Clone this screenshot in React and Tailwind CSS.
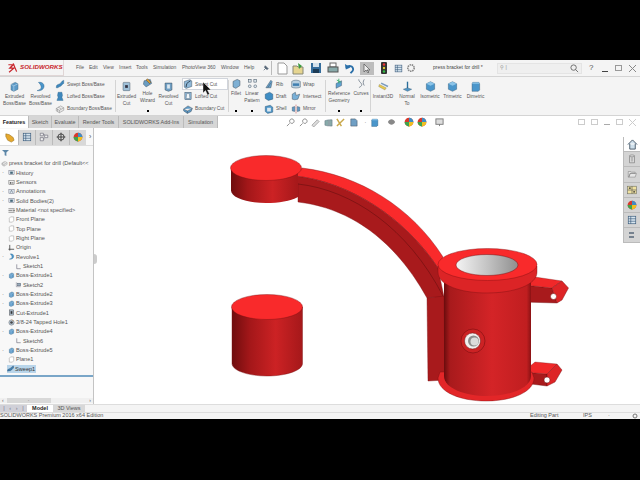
import React from "react";

const Ico = ({ size = 12, children }) => (
  <svg width={size} height={size} viewBox="0 0 16 16" className="shrink-0">
    {children}
  </svg>
);

// small hand drawn glyphs, all on a 16x16 grid
const glyphs = {
  extrude: (
    <>
      <path d="M3 5l6-3 4 2v8l-6 3-4-2z" fill="#5c9ac8" stroke="#35607f" strokeWidth=".7" />
      <path d="M3 5l4 2 6-3M7 7v8" fill="none" stroke="#c8dff0" strokeWidth=".8" />
    </>
  ),
  revolve: <path d="M5 2c6-1 9 3 8 7s-6 6-10 5c3-1 6-2 6-5S7 4 5 2z" fill="#4a96cb" stroke="#2c6086" strokeWidth=".6" />,
  swept: <path d="M2 14c0-5 2-5 5-6s3-5 7-6v5c-3 1-3 4-6 5s-3 2-3 2z" fill="#3f88bd" stroke="#2c6086" strokeWidth=".6" />,
  lofted: <path d="M5 2h6l1 5-1 3 2 5H3l2-5-1-3z" fill="#3f88bd" stroke="#2c6086" strokeWidth=".6" />,
  boundary: (
    <path d="M2 7l7-4 5 3v4l-7 4-5-3zM2 7l5 3 7-4M7 10v4M5 5l5 3M4 12V8" fill="#e8e8e8" stroke="#777" strokeWidth=".7" />
  ),
  cut: (
    <>
      <rect x="3" y="2" width="10" height="12" rx="1" fill="#9fc0d8" stroke="#456" strokeWidth=".7" />
      <rect x="6" y="6" width="4" height="4" fill="#334" />
    </>
  ),
  wizard: (
    <>
      <path d="M3 4l9-2 2 6-8 5-4-4z" fill="#6a9cc0" stroke="#345" strokeWidth=".6" />
      <path d="M8 1l5 5-2 2-5-5z" fill="#e0a030" stroke="#333" strokeWidth=".6" />
    </>
  ),
  revcut: (
    <>
      <path d="M3 3h10v10l-5 2-5-2z" fill="#6f9fc4" stroke="#345" strokeWidth=".7" />
      <path d="M6 5h4v6H6z" fill="#dde8f0" />
    </>
  ),
  sweptcut: (
    <>
      <path d="M2 4l9-3 3 2v9l-9 3-3-2z" fill="#8fb8d8" stroke="#345" strokeWidth=".7" />
      <path d="M5 13c0-5 2-8 7-10" fill="none" stroke="#234" strokeWidth="1.4" />
    </>
  ),
  loftcut: (
    <>
      <rect x="3" y="2" width="10" height="12" fill="#8fb8d8" stroke="#345" strokeWidth=".7" />
      <path d="M6 4h4l1 8H5z" fill="#f0f5f9" stroke="#345" strokeWidth=".5" />
    </>
  ),
  boundcut: <path d="M1 8l7-5 7 4-2 5-6 3-6-4zM1 8l6 3 8-4M7 11v4" fill="#5f9ac6" stroke="#345" strokeWidth=".7" />,
  fillet: <path d="M3 5l6-3 4 2v7l-6 4-4-2z" fill="#7fb0d4" stroke="#345" strokeWidth=".7" />,
  pattern: (
    <g fill="#dfe8ee" stroke="#456" strokeWidth=".8">
      <rect x="2" y="2" width="4" height="4" />
      <rect x="10" y="2" width="4" height="4" />
      <circle cx="4" cy="12" r="2" />
      <circle cx="12" cy="12" r="2" />
    </g>
  ),
  rib: <path d="M3 14L11 2l2 2-2 10zM6 14l5-8" fill="#69a2cc" stroke="#345" strokeWidth=".7" />,
  draft: <path d="M2 5l7-3 5 3v8l-7 2-5-3z" fill="#3f8dc4" stroke="#27506e" strokeWidth=".7" />,
  shell: (
    <>
      <path d="M2 4l8-2 4 3v8l-8 2-4-3z" fill="#4f95c6" stroke="#27506e" strokeWidth=".7" />
      <path d="M5 6h6v6H5z" fill="#dce8f0" />
    </>
  ),
  wrap: (
    <>
      <path d="M1 4c4-3 10-3 14 0v9c-4 2-10 2-14 0z" fill="#b7cfe0" stroke="#456" strokeWidth=".7" />
      <rect x="3" y="7" width="10" height="4" fill="#3f7fb0" />
    </>
  ),
  intersect: <path d="M2 13V5l5-3 1 5 6-2-3 8-5 1z" fill="#78b0d8" stroke="#345" strokeWidth=".7" />,
  mirror: (
    <>
      <path d="M8 1v14" stroke="#c44" strokeWidth="1" strokeDasharray="2 1" />
      <path d="M2 5l4-1v8l-4-1zM14 5l-4-1v8l4-1z" fill="#5f9ac6" stroke="#345" strokeWidth=".6" />
    </>
  ),
  refgeo: (
    <>
      <path d="M3 8l8-4v7l-8 4z" fill="#5fa0d0" stroke="#345" strokeWidth=".6" />
      <path d="M7 1v7M4 3l6 3" stroke="#3a6" strokeWidth="1.2" />
    </>
  ),
  curves: <path d="M4 2c0 4 6 6 4 9s-4 2-3 3M12 2c-2 3-2 6 0 9" fill="none" stroke="#456" strokeWidth=".9" />,
  instant: (
    <>
      <path d="M2 5l10 5-2 3L1 8z" fill="#e8c84a" stroke="#886" strokeWidth=".6" />
      <path d="M5 2l10 5-1 2L4 4z" fill="#7a9cc0" />
    </>
  ),
  normal: (
    <>
      <path d="M8 1v10" stroke="#2a6d9a" strokeWidth="2" />
      <path d="M2 12l6-2 6 2-6 3z" fill="#4f95c6" stroke="#27506e" strokeWidth=".6" />
    </>
  ),
  cube: (
    <>
      <path d="M8 1l6 3v8l-6 3-6-3V4z" fill="#4a96cb" stroke="#27506e" strokeWidth=".6" />
      <path d="M8 1l6 3-6 3-6-3z" fill="#8cc4e8" />
    </>
  ),
  cubed: (
    <>
      <path d="M4 2h9l1 2v9l-2 2H3V4z" fill="#4a96cb" stroke="#27506e" strokeWidth=".6" />
      <path d="M4 2h9l1 2H3z" fill="#8cc4e8" />
    </>
  ),
  folder: <path d="M2 4h4l1 1h6v2H5L3 13H2zM5 7h10l-2 6H3z" fill="#e6e6e6" stroke="#777" strokeWidth=".8" />,
  sensor: (
    <>
      <rect x="2" y="4" width="12" height="9" fill="#eee" stroke="#555" />
      <circle cx="6" cy="9" r="2" fill="#555" />
      <circle cx="11" cy="9" r="1.5" fill="#555" />
    </>
  ),
  anno: (
    <>
      <rect x="2" y="3" width="12" height="10" fill="#dfe8f0" stroke="#667" />
      <path d="M5 11l3-6 3 6" fill="none" stroke="#345" />
    </>
  ),
  bodies: (
    <>
      <rect x="2" y="3" width="12" height="10" fill="#dfe8f0" stroke="#667" />
      <rect x="5" y="6" width="6" height="5" fill="#467" />
    </>
  ),
  material: <path d="M1 4h14M1 8h9M1 12h14M12 7h3v2h-3z" stroke="#555" strokeWidth="1.4" fill="none" />,
  plane: <path d="M6 2h7v9l-3 3H3V5z" fill="#fff" stroke="#888" />,
  origin: <path d="M4 2v10h10M1 12h3M4 12v3" fill="none" stroke="#222" strokeWidth="1.6" />,
  target: (
    <>
      <circle cx="8" cy="8" r="5" fill="none" stroke="#222" strokeWidth="1.2" />
      <path d="M8 1v14M1 8h14" stroke="#222" strokeWidth="1.2" />
    </>
  ),
  config: <path d="M2 2h5v4H2zM2 9h5v5H2zM9 5h5v4H9zM7 4h2M7 11h2" fill="#eee" stroke="#667" />,
  sketch: <path d="M4 3v10h9" fill="none" stroke="#667" strokeWidth="1.4" />,
  sketch2: (
    <>
      <path d="M3 3v10h10" fill="none" stroke="#667" />
      <rect x="6" y="5" width="7" height="6" fill="#9ab" stroke="#456" />
    </>
  ),
  cutex: (
    <>
      <rect x="3" y="2" width="10" height="12" fill="#abc" stroke="#444" />
      <rect x="6" y="5" width="4" height="6" fill="#333" />
    </>
  ),
  tapped: (
    <>
      <circle cx="8" cy="8" r="6" fill="#bcd" stroke="#555" />
      <circle cx="8" cy="8" r="3" fill="#444" />
      <path d="M8 1l5 4" stroke="#c83" />
    </>
  ),
  sweep: <path d="M1 14c0-5 3-5 6-6s3-5 8-6v5c-3 1-3 4-7 6z" fill="#3f7fb0" stroke="#234" strokeWidth=".6" />,
  color: (
    <>
      <circle cx="8" cy="8" r="7" fill="#d8392b" />
      <path d="M8 8V1a7 7 0 0 1 7 7z" fill="#3f8dc4" />
      <path d="M8 8h7a7 7 0 0 1-7 7z" fill="#f0c020" />
      <path d="M8 8v7a7 7 0 0 1-7-7z" fill="#3fa34d" />
    </>
  ),
  list: (
    <>
      <rect x="2" y="2" width="12" height="12" fill="#d8e6f0" stroke="#357" />
      <path d="M2 6h12M2 10h12M6 2v12" stroke="#357" />
    </>
  ),
  can: (
    <>
      <path d="M4 3h8v11H4z" fill="#ddd" stroke="#777" />
      <ellipse cx="8" cy="3" rx="4" ry="1.5" fill="#eee" stroke="#777" />
      <path d="M7 5v7M9 5v7" stroke="#999" />
    </>
  ),
  grid: (
    <>
      <rect x="1" y="2" width="14" height="12" fill="#f0e2a0" stroke="#776" />
      <path d="M1 8h14M8 2v12" stroke="#555" />
      <rect x="3" y="4" width="3" height="2" fill="#333" />
      <rect x="10" y="10" width="3" height="2" fill="#333" />
    </>
  ),
};

const Big = ({ w, glyph, lines, dot, icon = 11, top = 4 }) => (
  <div className={`relative flex h-full shrink-0 flex-col items-center text-center leading-[7px] ${w}`}>
    <div className={top === 4 ? "mb-[1px] mt-[4px]" : "mb-[1px] mt-[1px]"}>
      <Ico size={icon}>{glyphs[glyph]}</Ico>
    </div>
    {lines.map((l) => (
      <span key={l} className="whitespace-nowrap">
        {l}
      </span>
    ))}
    {dot && <span className="absolute bottom-[3px] h-[2px] w-[2px] bg-black" />}
  </div>
);

const Small = ({ glyph, label, boxed }) => (
  <div
    className={`flex h-[12.5px] items-center gap-[2px] whitespace-nowrap ${
      boxed ? "border border-gray-300 bg-white" : "border border-transparent"
    }`}
  >
    <Ico size={10}>{glyphs[glyph]}</Ico>
    <span>{label}</span>
  </div>
);

const Sep = () => <div className="my-[3px] w-px shrink-0 bg-[#d4d4d4]" />;

const menus = [
  ["File", "w-[13px]"],
  ["Edit", "w-[14px]"],
  ["View", "w-[16px]"],
  ["Insert", "w-[17px]"],
  ["Tools", "w-[17px]"],
  ["Simulation", "w-[29px]"],
  ["PhotoView 360", "w-[39px]"],
  ["Window", "w-[23px]"],
  ["Help", "w-[19px]"],
];

const tabs = [
  ["Features", "w-[29px] bg-white font-bold text-[#222]"],
  ["Sketch", "w-[23px] bg-[#d6d6d6]"],
  ["Evaluate", "w-[27px] bg-[#d6d6d6]"],
  ["Render Tools", "w-[40px] bg-[#d6d6d6]"],
  ["SOLIDWORKS Add-Ins", "w-[65px] bg-[#d6d6d6]"],
  ["Simulation", "w-[34px] bg-[#d6d6d6]"],
];

const tree = [
  ["press bracket for drill  (Default<<", "folder", 0, false],
  ["History", "bodies", 1, true],
  ["Sensors", "sensor", 1, false],
  ["Annotations", "anno", 1, true],
  ["Solid Bodies(2)", "bodies", 1, true],
  ["Material <not specified>", "material", 1, false],
  ["Front Plane", "plane", 1, false],
  ["Top Plane", "plane", 1, false],
  ["Right Plane", "plane", 1, false],
  ["Origin", "origin", 1, false],
  ["Revolve1", "revolve", 1, true],
  ["Sketch1", "sketch", 2, false],
  ["Boss-Extrude1", "extrude", 1, true],
  ["Sketch2", "sketch2", 2, false],
  ["Boss-Extrude2", "extrude", 1, true],
  ["Boss-Extrude3", "extrude", 1, true],
  ["Cut-Extrude1", "cutex", 1, false],
  ["3/8-24 Tapped Hole1", "tapped", 1, false],
  ["Boss-Extrude4", "extrude", 1, true],
  ["Sketch6", "sketch", 2, false],
  ["Boss-Extrude5", "extrude", 1, true],
  ["Plane1", "plane", 1, false],
];

const Model = () => (
  <svg viewBox="94 128 529 276" className="h-full w-full">
    <defs>
      <linearGradient id="side" x1="0" x2="1" y1="0" y2="0">
        <stop offset="0" stopColor="#6f0d0e" />
        <stop offset=".25" stopColor="#a31719" />
        <stop offset=".62" stopColor="#cc2224" />
        <stop offset="1" stopColor="#a5181a" />
      </linearGradient>
      <linearGradient id="body" x1="0" x2="1" y1="0" y2="0">
        <stop offset="0" stopColor="#6a0c0d" />
        <stop offset=".07" stopColor="#a81a1c" />
        <stop offset=".55" stopColor="#d42427" />
        <stop offset=".95" stopColor="#c01e20" />
        <stop offset="1" stopColor="#8a1214" />
      </linearGradient>
      <linearGradient id="bore" x1="0" x2="1" y1="0" y2="0">
        <stop offset="0" stopColor="#f4f4f4" />
        <stop offset=".5" stopColor="#c4c4c4" />
        <stop offset="1" stopColor="#8f8f8f" />
      </linearGradient>
    </defs>

    {/* arm */}
    <path d="M302 168C360 175 412 208 443 257L438 268C405 218 350 182 295 176Z" fill="#f92a2b" stroke="#7a1012" strokeWidth=".4" />
    <path d="M295 176C350 182 405 218 438 268L444 297L427 298C395 240 350 208 298 202L298 184Z" fill="#a81a1c" stroke="#7a1012" strokeWidth=".4" />
    <path d="M298 184C352 190 408 228 443 296" fill="none" stroke="#5c0c0d" strokeWidth=".5" />
    <path d="M427 298L444 296L445 380L428 381Z" fill="#a81a1c" stroke="#7a1012" strokeWidth=".4" />

    {/* top disc */}
    <path d="M231 168V190.5C231 197.5 247 203 266 203C279 203 290 201 298 197V170Z" fill="url(#side)" />
    <ellipse cx="266" cy="168" rx="35.5" ry="12.5" fill="#f92a2b" stroke="#7a1012" strokeWidth=".4" />

    {/* loose cylinder */}
    <path d="M232 307V363.5C232 370.5 248 376 267 376C286 376 302.5 370.5 302.5 363.5V307Z" fill="url(#side)" stroke="#7a1012" strokeWidth=".4" />
    <ellipse cx="267" cy="307" rx="35.5" ry="12.5" fill="#f92a2b" stroke="#7a1012" strokeWidth=".4" />

    {/* lugs */}
    <path d="M524 285L552 288L557 303L523 302Z" fill="#a81a1c" stroke="#6d0d0e" strokeWidth=".4" />
    <path d="M524 285L535 277L562 281L552 288Z" fill="#f02829" stroke="#6d0d0e" strokeWidth=".3" />
    <path d="M552 288L562 281L568.5 288L562 300L557 303Z" fill="#dd2426" stroke="#6d0d0e" strokeWidth=".4" />
    <circle cx="553.5" cy="296.5" r="3" fill="#fff" stroke="#6d0d0e" strokeWidth=".5" />
    <path d="M523 372L547 374L547 386L523 383Z" fill="#a81a1c" stroke="#6d0d0e" strokeWidth=".4" />
    <path d="M523 372L535 362L557 364L547 374Z" fill="#f02829" stroke="#6d0d0e" strokeWidth=".3" />
    <path d="M547 374L557 364L562 370L555 382L547 386Z" fill="#dd2426" stroke="#6d0d0e" strokeWidth=".4" />
    <circle cx="547" cy="380" r="3" fill="#fff" stroke="#6d0d0e" strokeWidth=".5" />

    {/* main body */}
    <path d="M438 378C438 392 460 401 486 401C512 401 534 392 534 378L532 372H440Z" fill="#e32628" stroke="#7a1012" strokeWidth=".4" />
    <path d="M444 278H531V376C531 388 510 396 487 396C464 396 444 388 444 376Z" fill="url(#body)" />
    <path d="M438 266V272C438 285 460 293 487 293C514 293 537 285 537 272V266Z" fill="#dc2426" stroke="#7a1012" strokeWidth=".4" />
    <ellipse cx="487.5" cy="264.5" rx="49.5" ry="16" fill="#f92a2b" stroke="#7a1012" strokeWidth=".4" />
    <ellipse cx="487" cy="265" rx="31" ry="10.5" fill="url(#bore)" stroke="#7a1012" strokeWidth=".5" />

    {/* side boss */}
    <circle cx="473" cy="341" r="12" fill="#cc2224" stroke="#6d0d0e" strokeWidth=".5" />
    <circle cx="472.5" cy="341" r="8" fill="#f0f0f0" stroke="#6d0d0e" strokeWidth=".5" />
    <circle cx="473.5" cy="341" r="5.5" fill="#8c8c8c" />
    <circle cx="474.5" cy="341.5" r="4" fill="#dcdcdc" />
  </svg>
);

const headsUp = [
  ["search", 291], ["search", 303], ["edit", 317], ["box", 329], ["cross", 342], ["doc", 354],
];

export default function App() {
  return (
    <div className="flex h-[480px] w-[640px] flex-col overflow-hidden bg-black font-['Liberation_Sans',sans-serif] text-[5px] text-[#555]">
      <div className="h-[60px] shrink-0" />

      {/* menu bar */}
      <div className="flex h-[16px] shrink-0 items-center bg-[#f4f4f4]">
        <div className="flex h-full w-[64px] shrink-0 items-center gap-[2px] border-r border-b border-[#e0d6d6] pl-[7px] text-[6.2px] font-bold italic leading-none text-[#c8242b]">
          <svg width="11" height="11" viewBox="0 0 16 16">
            <path d="M2 4h7L4 9h6l-7 6M9 2l5 12" fill="none" stroke="#c8242b" strokeWidth="1.8" />
          </svg>
          <span>SOLIDWORKS</span>
        </div>
        <div className="ml-[12px] flex shrink-0 items-center">
          {menus.map(([m, w]) => (
            <span key={m} className={`whitespace-nowrap ${w}`}>
              {m}
            </span>
          ))}
        </div>
        <svg width="6" height="6" viewBox="0 0 8 8" className="shrink-0">
          <path d="M1 7l3-3M3 1l4 4-2 1-3-3z" fill="#567" stroke="#567" />
        </svg>
        <div className="ml-[2px] h-[14px] w-px shrink-0 bg-[#bbb]" />
        {/* quick access */}
        <div className="ml-[5px] flex shrink-0 items-center">
          <div className="flex w-[15px]">
            <svg width="11" height="13" viewBox="0 0 11 13"><path d="M1 1h6l3 3v8H1z" fill="#fff" stroke="#999" /></svg>
          </div>
          <div className="flex w-[18px]">
            <svg width="13" height="13" viewBox="0 0 13 13"><path d="M1 4h4l1 1h5v7H1z" fill="#e6d590" stroke="#887" /><path d="M6 1l4 3-3 3z" fill="#3a9a3a" /></svg>
          </div>
          <div className="flex w-[17px]">
            <svg width="12" height="12" viewBox="0 0 12 12"><rect x="1" y="1" width="10" height="10" fill="#356d9c" /><rect x="3" y="1" width="6" height="4" fill="#d5e2ec" /><rect x="3" y="7" width="6" height="4" fill="#1c3b55" /></svg>
          </div>
          <div className="flex w-[17px]">
            <svg width="12" height="12" viewBox="0 0 12 12"><rect x="3" y="1" width="6" height="4" fill="#fff" stroke="#666" /><rect x="1" y="5" width="10" height="5" fill="#8aa" stroke="#555" /></svg>
          </div>
          <div className="flex w-[16px]">
            <svg width="11" height="11" viewBox="0 0 12 12"><path d="M2 5c3-3 8-2 8 2 0 2-2 3-3 4" fill="none" stroke="#2a6fa8" strokeWidth="2" /><path d="M1 1l1 6 5-2z" fill="#2a6fa8" /></svg>
          </div>
          <div className="flex h-[13px] w-[14px] items-center justify-center bg-[#bdbdbd]">
            <svg width="9" height="11" viewBox="0 0 9 11"><path d="M1 1v8l2-2 2 3 1-1-2-2h3z" fill="#eee" stroke="#555" strokeWidth=".7" /></svg>
          </div>
          <div className="ml-[7px] flex w-[13px]">
            <svg width="6" height="12" viewBox="0 0 6 12"><rect width="6" height="12" rx="1" fill="#333" /><circle cx="3" cy="2.5" r="1.2" fill="#e33" /><circle cx="3" cy="6" r="1.2" fill="#dc3" /><circle cx="3" cy="9.5" r="1.2" fill="#3b4" /></svg>
          </div>
          <div className="flex w-[12px]">
            <Ico size={9}>{glyphs.list}</Ico>
          </div>
          <svg width="10" height="10" viewBox="0 0 10 10"><circle cx="5" cy="5" r="3.2" fill="none" stroke="#888" strokeWidth="1.6" strokeDasharray="1.5 .7" /></svg>
        </div>
        <span className="ml-[17px] w-[52px] shrink-0 whitespace-nowrap text-[#444]">press bracket for drill *</span>
        <div className="ml-[12px] flex h-[11px] w-[85px] shrink-0 items-center border border-[#e4e4e4] bg-[#efefef] pl-[2px]">
          <span className="text-[#888]">⚲ |</span>
          <svg width="9" height="9" viewBox="0 0 10 10" className="ml-auto mr-[2px]"><circle cx="4" cy="4" r="3" fill="none" stroke="#666" /><path d="M6 6l3 3" stroke="#666" /></svg>
        </div>
        <span className="ml-[7px] shrink-0 text-[8px] text-[#555]">?</span>
        <div className="ml-auto flex shrink-0 items-center gap-[7px] pr-[4px]">
          <span className="h-px w-[6px] translate-y-[3px] bg-[#444]" />
          <span className="h-[6px] w-[7px] border border-[#999]" />
          <svg width="7" height="7" viewBox="0 0 7 7"><path d="M0 0l7 7M7 0L0 7" stroke="#888" /></svg>
        </div>
      </div>

      {/* ribbon */}
      <div className="flex h-[40px] shrink-0 border-y border-[#d4d4d4] bg-[#f4f4f4] text-[4.8px]">
        <Big w="w-[28px] pl-[1px]" glyph="extrude" lines={["Extruded", "Boss/Base"]} />
        <Big w="w-[25px]" glyph="revolve" lines={["Revolved", "Boss/Base"]} />
        <div className="flex w-[62px] shrink-0 flex-col pl-[1px] pt-[1px]">
          <Small glyph="swept" label="Swept Boss/Base" />
          <Small glyph="lofted" label="Lofted Boss/Base" />
          <Small glyph="boundary" label="Boundary Boss/Base" />
        </div>
        <Sep />
        <Big w="w-[21px]" glyph="cut" lines={["Extruded", "Cut"]} />
        <Big w="w-[21px]" glyph="wizard" lines={["Hole", "Wizard"]} top={1} dot />
        <Big w="w-[21px]" glyph="revcut" lines={["Revolved", "Cut"]} />
        <div className="ml-[3px] flex w-[46px] shrink-0 flex-col pt-[1px]">
          <Small glyph="sweptcut" label="Swept Cut" boxed />
          <Small glyph="loftcut" label="Lofted Cut" />
          <Small glyph="boundcut" label="Boundary Cut" />
        </div>
        <Sep />
        <Big w="w-[14px]" glyph="fillet" lines={["Fillet"]} top={1} dot />
        <Big w="w-[18px]" glyph="pattern" lines={["Linear", "Pattern"]} top={1} dot />
        <div className="ml-[2px] flex w-[27px] shrink-0 flex-col pt-[1px]">
          <Small glyph="rib" label="Rib" />
          <Small glyph="draft" label="Draft" />
          <Small glyph="shell" label="Shell" />
        </div>
        <div className="flex w-[35px] shrink-0 flex-col pt-[1px]">
          <Small glyph="wrap" label="Wrap" />
          <Small glyph="intersect" label="Intersect" />
          <Small glyph="mirror" label="Mirror" />
        </div>
        <Sep />
        <Big w="w-[26px]" glyph="refgeo" lines={["Reference", "Geometry"]} top={1} dot />
        <Big w="w-[18px]" glyph="curves" lines={["Curves"]} top={1} dot />
        <Sep />
        <Big w="w-[24px]" glyph="instant" lines={["Instant3D"]} />
        <Big w="w-[24px]" glyph="normal" lines={["Normal", "To"]} />
        <Big w="w-[22px]" glyph="cube" lines={["Isometric"]} />
        <Big w="w-[23px]" glyph="cube" lines={["Trimetric"]} />
        <Big w="w-[23px]" glyph="cubed" lines={["Dimetric"]} />
      </div>

      {/* tabs and heads-up toolbar */}
      <div className="flex h-[12px] shrink-0 items-center bg-white text-[5.4px]">
        {tabs.map(([t, cls]) => (
          <div key={t} className={`flex h-full items-center justify-center whitespace-nowrap border-r border-[#bbb] ${cls}`}>
            {t}
          </div>
        ))}
        <div className="ml-[68px] flex items-center">
          {headsUp.map(([k, x]) => (
            <span key={x} className="flex w-[12.5px] items-center">
              <svg width="9" height="9" viewBox="0 0 10 10">
                {k === "search" ? (
                  <path d="M1 9l3-3M6.5 1a2.5 2.5 0 1 0 .01 0" fill="none" stroke="#888" />
                ) : k === "edit" ? (
                  <path d="M1 8l6-6 2 2-6 6z" fill="#ddd" stroke="#888" strokeWidth=".7" />
                ) : k === "box" ? (
                  <path d="M1 3l4-1v7l-4-1zM6 2h3v7H6z" fill="#8aa" stroke="#567" strokeWidth=".5" />
                ) : k === "cross" ? (
                  <path d="M1 9l8-8M1 1l5 8" stroke="#c9a84a" strokeWidth="1.6" />
                ) : (
                  <path d="M2 1h5l2 2v6H2z" fill="#6f9fc4" stroke="#456" strokeWidth=".6" />
                )}
              </svg>
            </span>
          ))}
          <span className="w-[9px] text-center">·</span>
          <span className="flex w-[17px]"><Ico size={9}>{glyphs.cubed}</Ico></span>
          <span className="flex w-[17px]">
            <svg width="9" height="8" viewBox="0 0 10 8"><path d="M1 4c2-4 6-4 8 0-2 4-6 4-8 0z" fill="#888" /></svg>
          </span>
          <span className="flex w-[13px]"><Ico size={10}>{glyphs.color}</Ico></span>
          <span className="flex w-[18px]"><Ico size={10}>{glyphs.color}</Ico></span>
          <span className="flex w-[15px]">
            <svg width="9" height="9" viewBox="0 0 10 10"><rect x="1" y="1" width="8" height="6" fill="#ddd" stroke="#777" /><path d="M5 7v2" stroke="#777" /></svg>
          </span>
        </div>
        <div className="ml-auto flex items-center gap-[6px] pr-[4px]">
          <span className="h-[6px] w-[7px] border border-[#ccc]" />
          <span className="h-[6px] w-[7px] border border-[#ccc]" />
          <span className="h-px w-[6px] translate-y-[2px] bg-[#aaa]" />
          <span className="h-[6px] w-[7px] border border-[#ccc]" />
          <svg width="7" height="7" viewBox="0 0 7 7"><path d="M0 0l7 7M7 0L0 7" stroke="#ccc" /></svg>
        </div>
      </div>

      {/* main area */}
      <div className="relative flex h-[276px] shrink-0 bg-white">
        {/* feature manager */}
        <div className="flex w-[94px] shrink-0 flex-col border-r border-[#c4c4c4] bg-[#f8f8f8]">
          <div className="flex h-[18px] shrink-0 items-center border-b border-[#ddd] pt-[1px]">
            <div className="flex h-[16px] w-[18px] items-center justify-center bg-white">
              <svg width="11" height="11" viewBox="0 0 12 12"><path d="M2 2l4 1 4 3 1 3-3 2-4-2-2-4z" fill="#e6a92f" stroke="#96701c" strokeWidth=".6" /></svg>
            </div>
            {["list", "config", "target", "color"].map((g) => (
              <div key={g} className="flex h-[15px] w-[17px] items-center justify-center border-l border-[#bbb] bg-[#d8d8d8]">
                <Ico size={10}>{glyphs[g]}</Ico>
              </div>
            ))}
            <span className="ml-[3px] text-[7px]">›</span>
          </div>
          <div className="flex h-[13px] shrink-0 items-center pl-[2px]">
            <svg width="7" height="7" viewBox="0 0 8 8"><path d="M0 1h8L5 4v4L3 7V4z" fill="#5d87a8" /></svg>
          </div>
          <div className="flex flex-col overflow-hidden text-[5.6px]">
            {tree.map(([label, glyph, depth, arrow], i) => (
              <div
                key={label}
                className={`flex h-[9.33px] shrink-0 items-center whitespace-nowrap ${
                  depth === 0 ? "pl-[1px]" : depth === 1 ? "pl-[8px]" : "pl-[15px]"
                }`}
              >
                {depth === 1 && (
                  <span className={`-ml-[6px] mr-[4px] w-[2px] text-[6px] ${arrow ? "" : "invisible"}`}>·</span>
                )}
                <span className="mr-[1px]">
                  <Ico size={7}>{glyphs[i === 0 ? "boundary" : glyph]}</Ico>
                </span>
                <span>{label}</span>
              </div>
            ))}
            <div className="flex h-[9.33px] shrink-0 items-center pl-[7px]">
              <span className="flex items-center gap-[1px] bg-[#b9d5ea] pr-[1px] text-[#333]">
                <Ico size={7}>{glyphs.sweep}</Ico>
                Sweep1
              </span>
            </div>
            <div className="mt-[1px] h-[2px] shrink-0 bg-[#7aa6c8]" />
          </div>
          <div className="mb-[1px] mt-auto flex h-[5px] shrink-0 items-center bg-[#f0f0f0] px-[2px] text-[5px]">
            <span>‹</span>
            <div className="ml-[3px] flex h-[5px] w-[44px] items-center justify-center bg-[#d8d8d8]">·</div>
            <span className="ml-auto">›</span>
          </div>
        </div>

        <div className="min-w-0 flex-1">
          <Model />
        </div>

        {/* task pane */}
        <div className="flex w-[17px] shrink-0 flex-col pt-[9px]">
          {["home", "can", "folder", "grid", "color", "list", "arrows"].map((g, i) => (
            <div
              key={g}
              className={`flex h-[15.2px] items-center justify-center border-b border-l border-[#bbb] ${
                i === 0 ? "bg-white" : "bg-[#d4d4d4]"
              }`}
            >
              {g === "home" ? (
                <svg width="11" height="11" viewBox="0 0 12 12"><path d="M1 6l5-5 5 5M3 5v6h6V5" fill="#cfe0ec" stroke="#456" /></svg>
              ) : g === "arrows" ? (
                <svg width="8" height="8" viewBox="0 0 8 8"><path d="M1 2h5M1 6h5" stroke="#567" strokeWidth="1.5" /></svg>
              ) : (
                <Ico size={10}>{glyphs[g]}</Ico>
              )}
            </div>
          ))}
        </div>

        {/* panel collapse handle */}
        <div className="absolute left-[94px] top-[126px] h-[10px] w-[3px] rounded-r-sm bg-[#ccc]" />
      </div>

      {/* model tabs */}
      <div className="flex h-[9px] shrink-0 items-center border-y border-[#ddd] bg-[#f4f4f4] text-[5.5px]">
        <div className="flex h-full w-[27px] items-center justify-around bg-[#d0d0d8] px-[1px] text-[#778]">
          {["|", "‹", "›", "|"].map((c, i) => (
            <span key={i}>{c}</span>
          ))}
        </div>
        <div className="flex h-full w-[26px] items-center justify-center bg-white font-bold text-[#222]">Model</div>
        <div className="flex h-full w-[32px] items-center justify-center bg-[#d8d8d8]">3D Views</div>
      </div>

      {/* status bar */}
      <div className="flex h-[6px] shrink-0 items-center whitespace-nowrap bg-[#f4f4f4] text-[5.5px] leading-none">
        <span>SOLIDWORKS Premium 2016 x64 Edition</span>
        <span className="ml-auto w-[53px]">Editing Part</span>
        <span className="w-[25px]">IPS</span>
        <span className="w-[24px]">·</span>
        <svg width="6" height="6" viewBox="0 0 6 6" className="mr-[2px]"><circle cx="3" cy="3" r="2" fill="none" stroke="#777" /></svg>
      </div>

      <div className="flex-1" />

      {/* mouse pointer */}
      <svg width="9" height="14" viewBox="0 0 9 14" className="absolute left-[203px] top-[82px]">
        <path d="M0 0v11l2.5-2.5L4.5 13l2-1-2-4H8z" fill="#111" stroke="#fff" strokeWidth=".4" />
      </svg>
    </div>
  );
}
